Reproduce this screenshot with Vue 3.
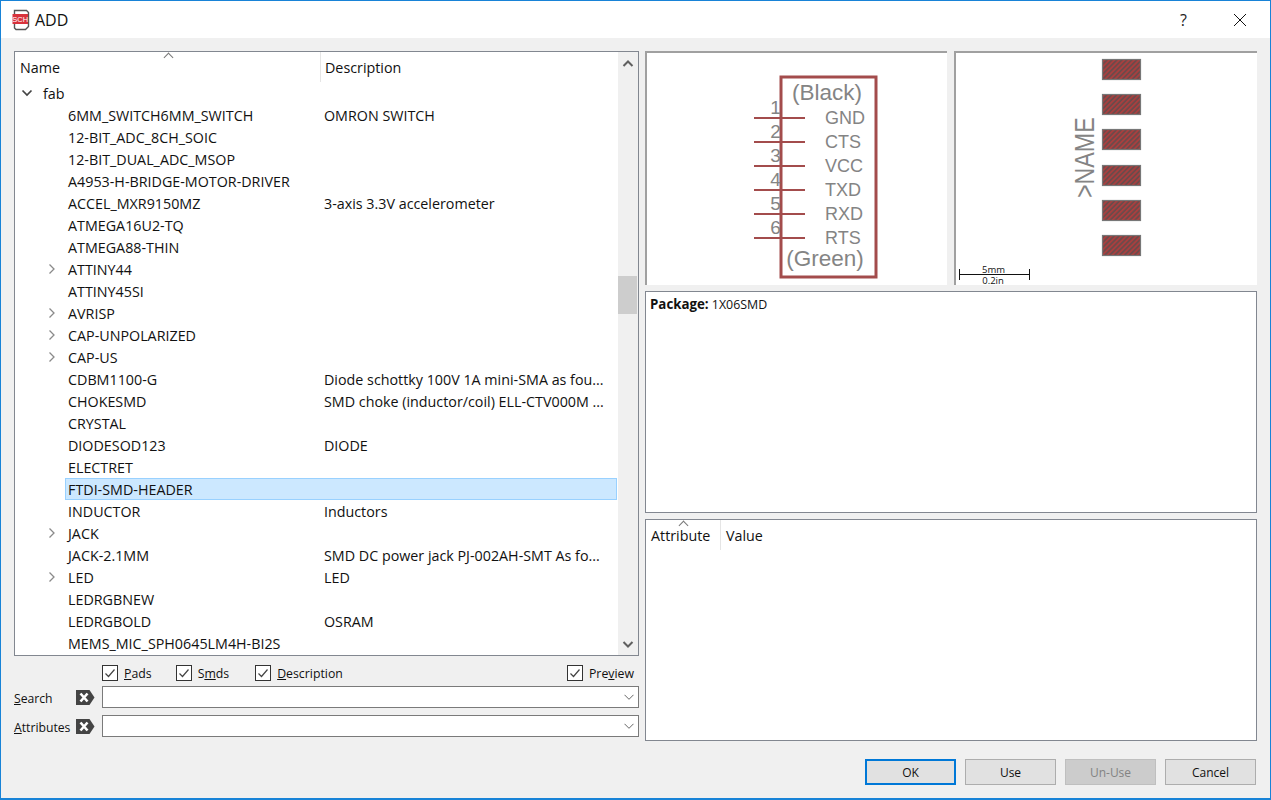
<script setup>
const rows = [
  { n: '6MM_SWITCH6MM_SWITCH', d: 'OMRON SWITCH' },
  { n: '12-BIT_ADC_8CH_SOIC' },
  { n: '12-BIT_DUAL_ADC_MSOP' },
  { n: 'A4953-H-BRIDGE-MOTOR-DRIVER' },
  { n: 'ACCEL_MXR9150MZ', d: '3-axis 3.3V accelerometer' },
  { n: 'ATMEGA16U2-TQ' },
  { n: 'ATMEGA88-THIN' },
  { n: 'ATTINY44', x: true },
  { n: 'ATTINY45SI' },
  { n: 'AVRISP', x: true },
  { n: 'CAP-UNPOLARIZED', x: true },
  { n: 'CAP-US', x: true },
  { n: 'CDBM1100-G', d: 'Diode schottky 100V 1A mini-SMA as fou...' },
  { n: 'CHOKESMD', d: 'SMD choke (inductor/coil) ELL-CTV000M ...' },
  { n: 'CRYSTAL' },
  { n: 'DIODESOD123', d: 'DIODE' },
  { n: 'ELECTRET' },
  { n: 'FTDI-SMD-HEADER', sel: true },
  { n: 'INDUCTOR', d: 'Inductors' },
  { n: 'JACK', x: true },
  { n: 'JACK-2.1MM', d: 'SMD DC power jack PJ-002AH-SMT As fo...' },
  { n: 'LED', d: 'LED', x: true },
  { n: 'LEDRGBNEW' },
  { n: 'LEDRGBOLD', d: 'OSRAM' },
  { n: 'MEMS_MIC_SPH0645LM4H-BI2S' }
]
const pinY = [118, 142, 166, 190, 214, 238]
const pins = [
  { num: '1', name: 'GND', y: 118 },
  { num: '2', name: 'CTS', y: 142 },
  { num: '3', name: 'VCC', y: 166 },
  { num: '4', name: 'TXD', y: 190 },
  { num: '5', name: 'RXD', y: 214 },
  { num: '6', name: 'RTS', y: 238 }
]
const pads = [59.5, 94.5, 129.5, 165.5, 200.5, 235.5]
</script>

<template>
  <div class="win">
    <header class="title">
      <svg class="appicon" width="18" height="22" viewBox="0 0 18 22">
        <path d="M2.500 1.500h12l2 2v14l-3 3h-9.500l-1.500-1.500z" fill="#fff" stroke="#555" stroke-width="1.400" />
        <rect x="0.500" y="5" width="15.500" height="10" fill="#d8323c" />
        <text x="8.200" y="13" text-anchor="middle" class="sch">SCH</text>
      </svg>
      <span class="ttl">ADD</span>
      <span class="help">?</span>
      <svg class="close" width="14" height="14" viewBox="0 0 14 14">
        <path d="M1 1l12 12M13 1L1 13" stroke="#111" stroke-width="1" fill="none" />
      </svg>
    </header>

    <main class="body">
      <section class="left">
        <div class="tree">
          <div class="treeview">
            <div class="thead">
              <span class="sort up1"></span>
              <div class="th name">Name</div>
              <div class="th desc">Description</div>
            </div>
            <div class="row root">
              <svg class="chev" width="12" height="8" viewBox="0 0 12 8"><path d="M1.500 1.500L6 6l4.500-4.500" stroke="#444" stroke-width="1.700" fill="none" /></svg>
              <span>fab</span>
            </div>
            <div v-for="r in rows" :key="r.n" class="row" :class="{ sel: r.sel }">
              <svg v-if="r.x" class="exp" width="8" height="12" viewBox="0 0 8 12"><path d="M1.500 1.500L6 6l-4.500 4.500" stroke="#8a8a8a" stroke-width="1.300" fill="none" /></svg>
              <span class="cn">{{ r.n }}</span>
              <span class="cd">{{ r.d }}</span>
            </div>
          </div>
          <div class="vbar">
            <svg width="20" height="22" viewBox="0 0 20 22"><path d="M5.500 14l4.500-4.500 4.500 4.500" stroke="#606060" stroke-width="2" fill="none" /></svg>
            <div class="track"><div class="thumb"></div></div>
            <svg width="20" height="22" viewBox="0 0 20 22"><path d="M5.500 9l4.500 4.500L14.500 9" stroke="#606060" stroke-width="2" fill="none" /></svg>
          </div>
        </div>

        <div class="checks">
          <label class="chk"><span class="box"><svg width="14" height="14" viewBox="0 0 14 14"><path d="M2.500 7.500l3 3L11.500 3.500" stroke="#444" stroke-width="1.200" fill="none" /></svg></span><span><u>P</u>ads</span></label>
          <label class="chk wide"><span class="box"><svg width="14" height="14" viewBox="0 0 14 14"><path d="M2.500 7.500l3 3L11.500 3.500" stroke="#444" stroke-width="1.200" fill="none" /></svg></span><span>S<u>m</u>ds</span></label>
          <label class="chk"><span class="box"><svg width="14" height="14" viewBox="0 0 14 14"><path d="M2.500 7.500l3 3L11.500 3.500" stroke="#444" stroke-width="1.200" fill="none" /></svg></span><span><u>D</u>escription</span></label>
          <label class="chk last"><span class="box"><svg width="14" height="14" viewBox="0 0 14 14"><path d="M2.500 7.500l3 3L11.500 3.500" stroke="#444" stroke-width="1.200" fill="none" /></svg></span><span>Pre<u>v</u>iew</span></label>
        </div>

        <div class="field">
          <span class="lab"><u>S</u>earch</span>
          <svg class="clr" width="20" height="15" viewBox="0 0 20 15"><path d="M1 0h13.500L19.500 7.500 14.500 15H1z" fill="#444" /><path d="M5.500 3.500l7 8M12.500 3.500l-7 8" stroke="#fff" stroke-width="2.600" /></svg>
          <div class="combo"><svg width="10" height="7" viewBox="0 0 10 7"><path d="M.5.800l4.500 4.500L9.500.800" stroke="#666" stroke-width="1" fill="none" /></svg></div>
        </div>
        <div class="field f2">
          <span class="lab"><u>A</u>ttributes</span>
          <svg class="clr" width="20" height="15" viewBox="0 0 20 15"><path d="M1 0h13.500L19.500 7.500 14.500 15H1z" fill="#444" /><path d="M5.500 3.500l7 8M12.500 3.500l-7 8" stroke="#fff" stroke-width="2.600" /></svg>
          <div class="combo"><svg width="10" height="7" viewBox="0 0 10 7"><path d="M.5.800l4.500 4.500L9.500.800" stroke="#666" stroke-width="1" fill="none" /></svg></div>
        </div>
      </section>

      <section class="right">
        <div class="previews">
          <div class="pv p1">
            <svg width="300" height="232" viewBox="647 53 300 232" class="draw">
              <rect x="781" y="77" width="95" height="200" fill="none" stroke="#a34c4c" stroke-width="3" />
              <line v-for="y in pinY" :key="y" x1="754" x2="805" :y1="y" :y2="y" stroke="#a34c4c" stroke-width="2" />
              <text x="827" y="100" text-anchor="middle" class="sc lg">(Black)</text>
              <text x="825" y="266" text-anchor="middle" class="sc lg">(Green)</text>
              <g v-for="p in pins" :key="p.num">
                <text x="775.500" :y="p.y - 4" text-anchor="middle" class="sc num">{{ p.num }}</text>
                <text x="825" :y="p.y + 6" class="sc md">{{ p.name }}</text>
              </g>
            </svg>
          </div>
          <div class="pv p2">
            <svg width="301" height="232" viewBox="956 53 301 232" class="draw">
              <defs>
                <pattern id="hatch" width="3.500" height="3.500" patternUnits="userSpaceOnUse" patternTransform="rotate(-45 0 0)">
                  <rect width="3.500" height="3.500" fill="#6b4a4a" />
                  <rect width="3.500" height="1.800" fill="#a83f3f" />
                </pattern>
              </defs>
              <rect v-for="y in pads" :key="y" x="1102.500" :y="y" width="38" height="20" fill="url(#hatch)" stroke="#777" stroke-width="1.200" />
              <text transform="translate(1093.500 198) rotate(-90) scale(.86 1)" class="sc nm">&gt;NAME</text>
              <path d="M959.500 269v11M959.500 274.500h69.500M1029.500 269v11" stroke="#111" stroke-width="1" fill="none" />
              <text x="993.500" y="273" text-anchor="middle" class="scale">5mm</text>
              <text x="993" y="283.500" text-anchor="middle" class="scale">0.2in</text>
            </svg>
          </div>
        </div>
        <div class="pkg"><b>Package:</b> 1X06SMD</div>
        <div class="attr">
          <div class="ahead">
            <span class="sort up2"></span>
            <div class="ath a1">Attribute</div>
            <div class="ath a2">Value</div>
          </div>
        </div>
        <div class="buttons">
          <button class="btn def">OK</button>
          <button class="btn">Use</button>
          <button class="btn off">Un-Use</button>
          <button class="btn">Cancel</button>
        </div>
      </section>
    </main>
  </div>
</template>

<style>
html, body { margin: 0; padding: 0; background: #f0f0f0; }
</style>

<style scoped>
.win {
  width: 1271px; height: 800px; box-sizing: border-box;
  border: 1px solid #1883d7; border-bottom-width: 2px;
  background: #f0f0f0; overflow: hidden;
  font-family: "Open Sans", "Noto Sans", sans-serif; font-size: 14.300px; color: #111;
  display: flex; flex-direction: column;
}
.title { height: 37px; background: #fff; display: flex; align-items: center; padding: 0 0 0 11px; flex: none; }
.appicon { flex: none; margin-top: 1px; }
.sch { font-family: "Liberation Sans", sans-serif; font-size: 7.500px; fill: #fff; }
.ttl { margin-left: 5px; font-size: 16px; color: #111; }
.help { margin-left: auto; font-size: 16px; color: #222; margin-right: 46px; }
.close { margin-right: 23px; }
.body { flex: 1; display: flex; gap: 6px; padding: 13px 13px 0; min-height: 0; }
.left { width: 625px; flex: none; display: flex; flex-direction: column; }
.right { width: 612px; flex: none; display: flex; flex-direction: column; }

.tree { height: 605px; box-sizing: border-box; border: 1px solid #828790; background: #fff; display: flex; flex: none; }
.treeview { width: 603px; overflow: hidden; position: relative; flex: none; }
.thead { height: 30px; display: flex; position: relative; }
.th { line-height: 30px; padding-top: 1px; box-sizing: border-box; }
.th.name { width: 306px; padding-left: 5px; border-right: 1px solid #e5e5e5; }
.th.desc { padding-left: 4px; }
.sort { position: absolute; width: 6px; height: 6px; border-left: 1px solid #777; border-top: 1px solid #777; transform: rotate(45deg); }
.up1 { left: 150px; top: 2px; }
.up2 { left: 34px; top: 2px; }
.row { height: 22px; line-height: 23px; display: flex; position: relative; box-sizing: border-box; white-space: nowrap; padding-left: 53px; }
.row.root { padding-left: 28px; }
.row.sel { background: #cce8ff; outline: 1px solid #99d1ff; outline-offset: -1px; margin-left: 50px; margin-right: 1px; padding-left: 3px; }
.chev { position: absolute; left: 6px; top: 7px; }
.exp { position: absolute; left: 33px; top: 5px; }
.cn { width: 256px; flex: none; }
.cd { flex: none; }
.vbar { width: 20px; background: #f0f0f0; display: flex; flex-direction: column; flex: none; }
.vbar svg { flex: none; display: block; }
.track { flex: 1; position: relative; }
.thumb { position: absolute; top: 202px; left: 0; width: 19px; height: 38px; background: #cdcdcd; }

.checks { display: flex; height: 16px; margin-top: 9px; padding-left: 88px; flex: none; font-size: 12.300px; }
.chk { display: flex; align-items: center; gap: 6px; margin-right: 24px; }
.chk.wide { margin-right: 26px; }
.chk.last { margin-left: auto; margin-right: 5px; }
.box { width: 14px; height: 14px; border: 1px solid #333; background: #fff; display: block; flex: none; }
.box svg { display: block; }
.field { display: flex; align-items: center; height: 22px; margin-top: 5px; flex: none; font-size: 12.200px; position: relative; }
.f2 { margin-top: 7px; }
.lab { width: 61px; flex: none; padding-top: 2px; }
.clr { flex: none; }
.combo { margin-left: 7px; flex: 1; height: 22px; box-sizing: border-box; border: 1px solid #7a7a7a; background: #fff; display: flex; align-items: center; justify-content: flex-end; padding-right: 4px; }

.previews { display: flex; gap: 7px; height: 234px; flex: none; }
.pv { box-sizing: border-box; background: #fff; border-left: 2px solid #a0a0a0; border-top: 2px solid #a0a0a0; }
.p1 { width: 302px; }
.p2 { width: 303px; }
.draw { display: block; }
.sc { font-family: "Liberation Sans", sans-serif; fill: #848484; }
.lg { font-size: 22.500px; }
.md { font-size: 18px; }
.num { font-size: 19px; }
.nm { font-size: 27px; }
.scale { font-family: "Open Sans", sans-serif; font-size: 9.500px; fill: #111; }
.pkg { margin-top: 6px; height: 222px; box-sizing: border-box; border: 1px solid #828790; background: #fff; padding: 4px 4px; font-size: 12.400px; line-height: 16px; flex: none; }
.pkg b { font-weight: 700; font-size: 13.300px; }
.attr { margin-top: 6px; height: 222px; box-sizing: border-box; border: 1px solid #828790; background: #fff; flex: none; }
.ahead { height: 30px; display: flex; position: relative; }
.ath { line-height: 30px; box-sizing: border-box; padding-top: 1px; }
.a1 { width: 75px; padding-left: 5px; border-right: 1px solid #e5e5e5; }
.a2 { padding-left: 5px; }

.buttons { display: flex; justify-content: flex-end; gap: 9px; margin-top: 18px; margin-right: 1px; flex: none; }
.btn { width: 91px; height: 26px; box-sizing: border-box; border: 1px solid #adadad; background: #e1e1e1; font-family: inherit; font-size: 12px; color: #111; padding: 0; }
.btn.def { border: 2px solid #0078d7; }
.btn.off { background: #ccc; border-color: #bfbfbf; color: #838383; }
</style>
